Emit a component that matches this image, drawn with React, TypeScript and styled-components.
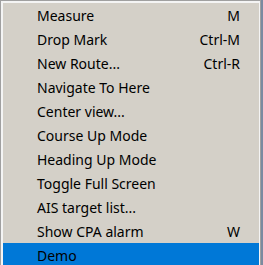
import React from "react";
import styled, { createGlobalStyle } from "styled-components";

const Global = createGlobalStyle`
  html, body { margin: 0; padding: 0; background: #7b8aa0; }
  body { width: 263px; height: 265px; overflow: hidden; }
`;

const Menu = styled.div`
  width: 259px;
  border: 1px solid #a0a0a0;
  border-bottom: none;
  background: #d4d0c8;
`;

const Inner = styled.div`
  border-top: 2px solid #f4f4f4;
  border-left: 2px solid #f4f4f4;
  border-right: 1px solid #f4f4f4;
  display: flex;
  flex-direction: column;
`;

const Item = styled.div<{ $active?: boolean }>`
  height: 24px;
  display: flex;
  align-items: center;
  justify-content: space-between;
  padding: 0 19px 0 34px;
  background: ${(p) => (p.$active ? "#0078d7" : "transparent")};
  color: #000;
  font-family: "Noto Sans", "Open Sans", sans-serif;
  font-size: 14px;
  white-space: nowrap;
`;

const Label = styled.span``;
const Shortcut = styled.span``;

const items: [string, string?][] = [
  ["Measure", "M"],
  ["Drop Mark", "Ctrl-M"],
  ["New Route...", "Ctrl-R"],
  ["Navigate To Here"],
  ["Center view..."],
  ["Course Up Mode"],
  ["Heading Up Mode"],
  ["Toggle Full Screen"],
  ["AIS target list..."],
  ["Show CPA alarm", "W"],
  ["Demo"],
];

export default function App() {
  return (
    <>
      <Global />
      <Menu>
        <Inner>
          {items.map(([label, sc], i) => (
            <Item key={label} $active={i === items.length - 1}>
              <Label>{label}</Label>
              {sc && <Shortcut>{sc}</Shortcut>}
            </Item>
          ))}
        </Inner>
      </Menu>
    </>
  );
}
